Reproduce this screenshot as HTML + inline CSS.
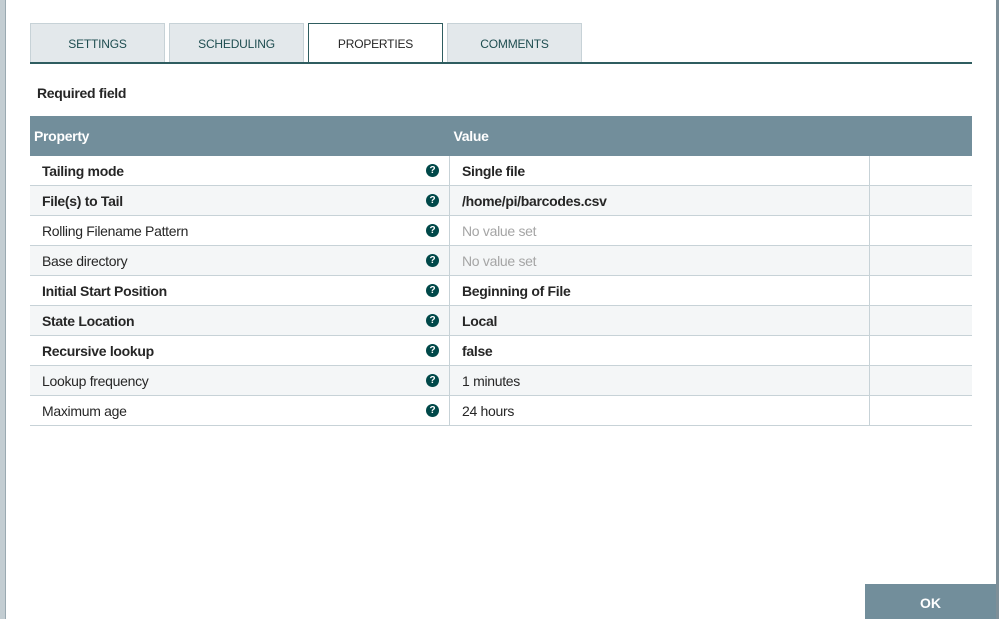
<!DOCTYPE html><html><head><style>
body{margin:0;width:999px;height:619px;background:#fff;position:relative;overflow:hidden;font-family:"Liberation Sans",sans-serif;}
.l{position:absolute;left:0;top:0;width:5px;height:619px;background:#c3cdd2;border-right:1px solid #9aa9b1}
.r{position:absolute;left:996px;top:0;width:3px;height:619px;background:#7e8f98}
.tab{position:absolute;top:23px;height:39px;width:135px;background:#e3e8eb;border:1px solid #c7d2d7;border-bottom:none;font-size:12px;color:#1e4d50;text-align:center;line-height:41px;box-sizing:border-box;letter-spacing:-0.2px}
.tab.a{background:#fff;border:1px solid #2f5d60;border-bottom:none;color:#262626;height:41px}
.line{position:absolute;left:30px;top:62px;width:942px;height:2px;background:#2f5d60}
.req{position:absolute;left:37px;top:85px;font-size:14px;font-weight:bold;color:#262626;letter-spacing:-0.3px}
table{position:absolute;left:30px;top:116px;width:942px;border-collapse:collapse;font-size:14px;color:#262626;letter-spacing:-0.3px}
th{background:#728e9b;color:#fff;text-align:left;height:40px;padding:0 4px;font-size:14px}
td{height:29px;border-bottom:1px solid #c7d2d7;padding:0 12px;position:relative}
tr:nth-child(odd) td{background:#f4f6f7}
td.p{width:395px;border-right:1px solid #c7d2d7}
td.v{width:395px;border-right:1px solid #c7d2d7}
.b{font-weight:bold}.g{color:#a5a5a5}
.q{position:absolute;right:10px;top:8px;width:13px;height:13px;border-radius:50%;background:#004849;color:#fff;font-size:10px;font-weight:bold;line-height:13px;text-align:center;letter-spacing:0}
.ok{position:absolute;left:865px;top:584px;width:131px;height:35px;background:#728e9b;color:#fff;font-weight:bold;font-size:14px;text-align:center;line-height:39px}
</style></head><body>
<div class="l"></div><div class="r"></div>
<div class="tab" style="left:30px">SETTINGS</div>
<div class="tab" style="left:169px">SCHEDULING</div>
<div class="tab a" style="left:308px">PROPERTIES</div>
<div class="tab" style="left:447px">COMMENTS</div>
<div class="line"></div>
<div class="req">Required field</div>
<table>
<tr><th>Property</th><th>Value</th><th></th></tr>
<tr><td class="p b">Tailing mode<span class="q">?</span></td><td class="v b">Single file</td><td></td></tr>
<tr><td class="p b">File(s) to Tail<span class="q">?</span></td><td class="v b">/home/pi/barcodes.csv</td><td></td></tr>
<tr><td class="p">Rolling Filename Pattern<span class="q">?</span></td><td class="v g">No value set</td><td></td></tr>
<tr><td class="p">Base directory<span class="q">?</span></td><td class="v g">No value set</td><td></td></tr>
<tr><td class="p b">Initial Start Position<span class="q">?</span></td><td class="v b">Beginning of File</td><td></td></tr>
<tr><td class="p b">State Location<span class="q">?</span></td><td class="v b">Local</td><td></td></tr>
<tr><td class="p b">Recursive lookup<span class="q">?</span></td><td class="v b">false</td><td></td></tr>
<tr><td class="p">Lookup frequency<span class="q">?</span></td><td class="v">1 minutes</td><td></td></tr>
<tr><td class="p">Maximum age<span class="q">?</span></td><td class="v">24 hours</td><td></td></tr>
</table>
<div class="ok">OK</div>
</body></html>
